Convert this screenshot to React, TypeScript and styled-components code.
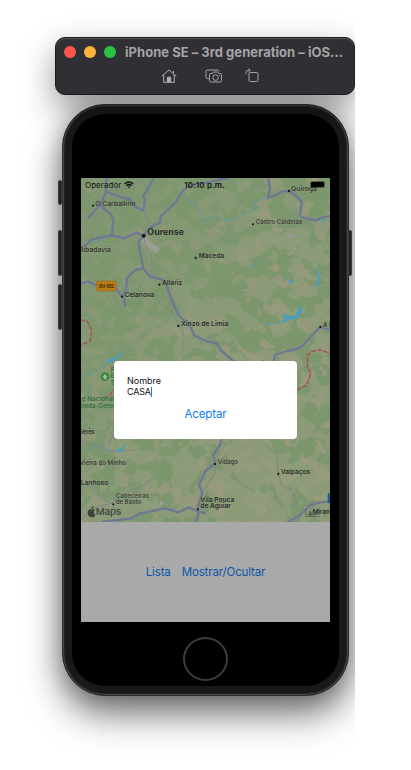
import React from "react";
import styled, { createGlobalStyle } from "styled-components";

const GlobalStyle = createGlobalStyle`
  *, *::before, *::after { box-sizing: border-box; }
  body { margin: 0; background: #fff; font-family: Inter, "Liberation Sans", sans-serif; }
`;

const Desktop = styled.main`
  width: 355px;
  height: 770px;
  padding: 37px 0 0 55px;
  overflow: hidden;
  background: #fff;
`;

const TitleBar = styled.header`
  position: relative;
  z-index: 1;
  width: 300px;
  height: 58px;
  border-radius: 10px;
  background: #302f34;
  border: 1px solid #1b1b1e;
  box-shadow: inset 0 1px 0 #57565a, 0 14px 34px rgba(0, 0, 0, 0.42);
`;

const TitleRow = styled.div`
  display: flex;
  align-items: center;
  height: 28px;
  padding-left: 8px;
`;

const Light = styled.span<{ $color: string }>`
  width: 12px;
  height: 12px;
  margin-right: 8px;
  border-radius: 50%;
  background: ${(p) => p.$color};
`;

const Title = styled.h1`
  margin: 0 0 0 1px;
  font-size: 13px;
  line-height: 16px;
  font-weight: 700;
  letter-spacing: 0.03px;
  white-space: nowrap;
  color: #a5a4a8;
`;

const Tools = styled.div`
  display: flex;
  padding: 2px 0 0 105px;
  svg { display: block; margin-right: 28px; }
  svg:nth-child(2) { margin-right: 22px; }
`;

const Phone = styled.section`
  position: relative;
  width: 287px;
  height: 592px;
  margin: 9px 0 0 7px;
  padding: 9px;
  border: 1px solid #2c2c2d;
  border-radius: 43px;
  background: #191919;
  box-shadow: inset 0 0 0 1px #464647, inset 0 0 0 2px #252526,
    0 18px 36px rgba(0, 0, 0, 0.56), 0 0 22px rgba(0, 0, 0, 0.2);
`;

const SideKey = styled.i<{ $top: number; $height: number; $right?: boolean }>`
  position: absolute;
  top: ${(p) => p.$top}px;
  ${(p) => (p.$right ? "right: -4px;" : "left: -5px;")}
  width: 4px;
  height: ${(p) => p.$height}px;
  border-radius: 2px;
  background: #242425;
  border: 1px solid #3b3b3c;
`;

const Glass = styled.div`
  display: flex;
  flex-direction: column;
  align-items: center;
  height: 572px;
  padding-top: 64px;
  border-radius: 33px;
  background: #000;
`;

const Screen = styled.div`
  position: relative;
  width: 249px;
  height: 444px;
  overflow: hidden;
  background: #a9a9a9;
`;

const MapSvg = styled.svg`
  display: block;
  width: 249px;
  height: 344px;
`;

const StatusBar = styled.div`
  position: absolute;
  inset: 0 0 auto 0;
  display: grid;
  grid-template-columns: 1fr auto 1fr;
  align-items: center;
  height: 14px;
  padding: 0 6px 0 4px;
  color: #111610;
  font-size: 8px;
  line-height: 12px;
`;

const Carrier = styled.span`
  display: flex;
  align-items: center;
  gap: 3px;
  letter-spacing: 0.05px;
`;

const Clock = styled.span`
  font-weight: 600;
  letter-spacing: 0.12px;
`;

const Battery = styled.i`
  justify-self: end;
  width: 13px;
  height: 5px;
  margin-top: -1px;
  border-radius: 1px;
  background: #000;
  box-shadow: 0 0 0 1px rgba(0, 0, 0, 0.35);
`;

const Actions = styled.nav`
  display: flex;
  justify-content: center;
  align-items: center;
  gap: 11px;
  height: 100px;
  padding-top: 1px;
`;

const LinkButton = styled.button<{ $bright?: boolean }>`
  padding: 0;
  border: 0;
  background: none;
  font: 400 11.5px/15px Inter, "Liberation Sans", sans-serif;
  letter-spacing: -0.14px;
  color: ${(p) => (p.$bright ? "#0a7cf5" : "#0b55a8")};
`;

const Dialog = styled.div`
  position: absolute;
  left: 33px;
  top: 183px;
  display: flex;
  flex-direction: column;
  width: 183px;
  height: 78px;
  padding: 14px 13px 0;
  border-radius: 4px;
  background: #fff;
  color: #111;
  font-size: 9px;
  line-height: 11px;
`;

const Field = styled.div`
  display: flex;
  align-items: center;
  height: 11px;
  letter-spacing: -0.2px;
`;

const Caret = styled.i`
  width: 1px;
  height: 10px;
  background: #3b67e8;
`;

const Accept = styled(LinkButton)`
  align-self: center;
  margin-top: 10px;
`;

const HomeButton = styled.div`
  width: 45px;
  height: 44px;
  margin-top: 15px;
  border: 2px solid #3d3d3d;
  border-radius: 50%;
`;

const majorRoads = [
  "M18 218L35 208 50 193 75 188 110 181 148 190 185 173 205 182",
  "M95 9L92 30V55L75 90 108 118 116 135 110 181M40 128L75 90",
  "M92 50L140 68 165 72 180 95 205 107 210 75 205 65 225 30 237 9",
  "M205 182L225 158 255 143 258 123 300 85 325 45 350 30 390 24 425 16 460 9",
  "M205 182L191 200 196 235 205 280 225 305 265 315 275 330 286 365 310 420 345 452 357 480 395 500 425 505 440 528 475 558 560 625",
  "M205 280L180 285 155 310V335L145 360 150 390M18 325L40 320 60 330 120 335 140 365",
  "M580 9L585 40 578 68 605 60 620 50 645 48 665 65 680 80 675 123 690 130 725 136 740 128 766 123",
  "M595 565L600 540 635 528 660 523 680 515 735 456 765 464",
  "M85 1040L170 1030 195 1015 270 1000 310 1012 340 998 360 1005 390 1015",
  "M440 790L435 810 415 840 420 865 390 890 372 930 382 955 367 1000 370 1020 362 1041",
  "M640 1040L670 1025 705 990 735 982 766 980",
];

const minorRoads = [
  "M92 50L150 38 200 15",
  "M207 107L220 145 205 180 215 220 228 240 232 280 225 305",
  "M286 370L292 420 320 455 327 490 320 540 330 570",
  "M485 790L450 810 435 830M420 870V895L400 925 382 955",
  "M550 790L575 815 605 840 610 895 620 930 655 950 665 990",
  "M18 795L60 810 100 830 180 825M100 810L120 770",
  "M18 930L50 935 70 965 110 985 130 1015M110 985L170 945 210 930 240 900",
  "M110 985L50 1000 25 1030",
  "M395 480L420 500 435 530M705 990L725 1040",
];

const rivers = [
  "M325 55L340 75 370 97 385 120 390 138 420 122 440 135 475 135 510 115 545 100 540 80 578 68",
  "M140 530L122 548 105 552 85 570 55 595 35 600 18 620",
  "M35 205L50 197 70 199 95 185",
  "M35 828L50 820 75 812 90 822 120 832 135 823 155 810",
  "M715 275L725 290 735 305 732 325 720 335 717 345",
  "M530 272L545 270 548 264 556 262M632 310L645 320 655 320M455 205L445 195 438 192",
  "M570 449L600 445 628 442M738 128L752 138",
];

const streams = [
  "M200 485L235 455 310 420 350 390 390 385M265 720L300 740 345 700",
  "M660 130L680 180 720 230M450 250L445 200 470 160M330 900L380 840 400 800",
];

const clearings = [
  "M193 155L215 180 240 210 255 220 250 235 225 230 200 215 190 185Z",
  "M190 500L230 470 270 450 315 455 335 410 345 360 400 390 440 440 420 470 390 490 340 478 300 480 260 485 220 495Z",
  "M470 235L500 205 530 185 575 170 610 195 570 230 540 250 495 262Z",
  "M500 90L540 108 580 105 600 120 560 130 515 122Z",
  "M590 190L640 170 680 190 660 220 610 225Z",
  "M590 375L610 365 640 400 660 420 650 450 625 460 600 420Z",
  "M450 800L540 780 590 800 610 860 590 920 540 945 495 920 460 870Z",
  "M395 890L425 880 470 910 530 950 590 960 620 1000 590 1041H420L440 990 400 960Z",
  "M610 880L690 850 766 870V980L700 975 665 940 620 930Z",
  "M130 800L195 825 245 830 230 860 190 870 160 850 120 840Z",
  "M18 1000L65 960 110 975 190 990 240 975 250 1000 160 1035 18 1041Z",
  "M300 880L345 850 385 855 370 900 340 940 300 950 285 920Z",
  "M18 35L50 30 70 45 45 55Z",
  "M480 20L515 15 530 30 500 40 490 55Z",
];

type Place = {
  x: number;
  y: number;
  text: string;
  w: number;
  size?: number;
  color?: string;
  dot?: [number, number];
  bold?: boolean;
};

const places: Place[] = [
  { x: 61, y: 91, text: "O Carballiño", w: 121, dot: [54, 92], color: "#34372f" },
  { x: 217, y: 179, text: "Ourense", w: 110, size: 27, bold: true, dot: [206, 182] },
  { x: 12, y: 231, text: "Ribadavia", w: 96, color: "#373931" },
  { x: 371, y: 248, text: "Maceda", w: 76, dot: [362, 249] },
  { x: 648, y: 46, text: "Quiroga", w: 78, dot: [642, 48], color: "#373931" },
  { x: 542, y: 147, text: "Castro Caldelas", w: 140, dot: [534, 148], color: "#424439" },
  { x: 261, y: 329, text: "Allariz", w: 61, dot: [253, 329] },
  { x: 149, y: 364, text: "Celanova", w: 89, dot: [141, 365] },
  { x: 318, y: 452, text: "Xinzo de Limia", w: 142, dot: [310, 453] },
  { x: 744, y: 455, text: "A Gudiña", w: 80, dot: [736, 456], color: "#373931" },
  { x: 527, y: 571, text: "Verín", w: 50 },
  { x: 12, y: 777, text: "Gerês", w: 46 },
  { x: 14, y: 870, text: "Vieira do Minho", w: 139, color: "#3a3e36" },
  { x: 17, y: 930, text: "Lanhoso", w: 83, color: "#30332c" },
  { x: 122, y: 967, text: "Cabeceiras", w: 100, color: "#42453b" },
  { x: 122, y: 987, text: "de Basto", w: 77, dot: [115, 988], color: "#42453b" },
  { x: 428, y: 866, text: "Vidago", w: 61, dot: [420, 867], color: "#3b3e35" },
  { x: 618, y: 895, text: "Valpaços", w: 87, dot: [610, 897] },
  { x: 376, y: 979, text: "Vila Pouca", w: 102 },
  { x: 376, y: 999, text: "de Aguiar", w: 92, dot: [369, 1003] },
  { x: 713, y: 1015, text: "Mirandela", w: 91, dot: [706, 1019], color: "#252822" },
];

const Terrain = () => (
  <>
    <defs>
      <filter id="patches" x="0" y="0" width="100%" height="100%" colorInterpolationFilters="sRGB">
        <feTurbulence type="fractalNoise" baseFrequency="0.017 0.019" numOctaves={4} seed={8} />
        <feColorMatrix values="0 0 0 0 0.565  0 0 0 0 0.61  0 0 0 0 0.48  22 0 0 0 -11" />
      </filter>
      <filter id="heath" x="0" y="0" width="100%" height="100%" colorInterpolationFilters="sRGB">
        <feTurbulence type="fractalNoise" baseFrequency="0.024 0.026" numOctaves={3} seed={21} />
        <feColorMatrix values="0 0 0 0 0.61  0 0 0 0 0.605  0 0 0 0 0.495  0 22 0 0 -13.6" />
      </filter>
      <linearGradient id="spread" x1="0.15" y1="0" x2="0.75" y2="0.5">
        <stop offset="0" stopColor="#444" />
        <stop offset="1" stopColor="#ddd" />
      </linearGradient>
      <mask id="density">
        <rect x="18" y="9" width="747" height="1032" fill="url(#spread)" />
      </mask>
    </defs>
    <rect x="18" y="9" width="747" height="1032" fill="#7c966e" />
    <path d={clearings.join("")} fill="#8d9a77" />
    <g mask="url(#density)">
      <rect x="18" y="9" width="747" height="1032" filter="url(#patches)" />
      <rect x="18" y="9" width="747" height="1032" filter="url(#heath)" />
    </g>
    <path d="M195 180L212 183 228 206 255 219 243 233 222 216 210 210 200 195Z" fill="#9c9c99" />
    <path d="M640 175L657 180 650 193 640 187ZM105 975L120 980 118 1000 102 992ZM255 975L268 985 255 995Z" fill="#9a9a97" />
  </>
);

const RegionMap = () => (
  <MapSvg viewBox="18 9 747 1032" preserveAspectRatio="none">
    <Terrain />
    <g fill="none" strokeLinejoin="round" strokeLinecap="round">
      <path d={streams.join("")} stroke="#6d9a8c" strokeWidth="1.6" />
      <path d={rivers.join("")} stroke="#5b9ba5" strokeWidth="3" />
      <path d={minorRoads.join("")} stroke="#808985" strokeWidth="3.5" />
      <path d={majorRoads.join("")} stroke="#8c94a0" strokeWidth="10" opacity=".5" />
      <path d={majorRoads.join("")} stroke="#6f788c" strokeWidth="7" />
      <path
        d="M18 435L35 437 46 455 50 470 45 498 18 510M665 645L695 630 708 595 697 575 698 540 710 530 735 525 750 529 766 537M85 668L105 660 118 645"
        stroke="#a85558"
        strokeWidth="5"
        strokeDasharray="14 4"
        strokeLinecap="butt"
      />
    </g>
    <path
      d="M616 443L627 430 625 412 640 422 660 421 670 400 680 393 682 407 668 430 645 436 630 441ZM85 565L105 552 125 545 142 528 137 543 113 560ZM120 829L140 818 155 810 138 832ZM632 307L643 318 658 317 650 326 640 321ZM714 274L726 288 738 307 733 328 719 335 730 315 727 296ZM740 130L752 137 746 140Z"
      fill="#4f9eb8"
    />
    <rect x="65" y="318" width="58" height="30" rx="5" fill="#b87d16" stroke="#99681a" strokeWidth="2" />
    <rect x="758" y="954" width="20" height="31" rx="5" fill="#1c5da8" />
    <circle cx="90" cy="605" r="13" fill="#338a3d" />
    <path d="M90 597L98 606H94V613H86V606H82Z" fill="#a2bd98" />
    <g fontFamily='Inter, "Liberation Sans", sans-serif' stroke="#98a68b" strokeOpacity="0.55" strokeWidth="2.5" paintOrder="stroke">
      {places.map((p) => (
        <React.Fragment key={p.text}>
          {p.dot && (
            <circle cx={p.dot[0]} cy={p.dot[1]} r={p.bold ? 6 : 3.4} fill="#171a15" strokeWidth="1.5" />
          )}
          <text
            x={p.x}
            y={p.y + 1}
            fontSize={p.size ?? 19.5}
            fontWeight={p.bold ? 700 : 600}
            fill={p.color ?? "#292c25"}
            textLength={p.w}
            lengthAdjust="spacingAndGlyphs"
          >
            {p.text}
          </text>
        </React.Fragment>
      ))}
      <g fill="#2b6a33" fontSize="18" fontWeight="600">
        <text x="107" y="590">P</text>
        <text x="107" y="609">E</text>
        <text x="107" y="629">S</text>
        <text x="21" y="679" textLength="96" lengthAdjust="spacingAndGlyphs">e Nacional</text>
        <text x="18" y="698" textLength="104" lengthAdjust="spacingAndGlyphs">neda-Gerês</text>
      </g>
    </g>
    <text
      x="71"
      y="338"
      fontFamily='"Liberation Sans", sans-serif'
      fontSize="14.5"
      fontWeight="700"
      fill="#30220c"
      textLength="46"
      lengthAdjust="spacingAndGlyphs"
    >
      OU-531
    </text>
    <text x="690" y="1020" fontFamily="Inter, sans-serif" fontSize="17" fill="#414c43" textDecoration="underline">
      Legal
    </text>
    <g fill="#39443a">
      <path d="M50 1004C55 1001 58 1002 60 1005C54 1009 56 1016 61 1019C58 1027 54 1028 50 1026C46 1028 41 1026 39 1018C37 1010 40 1003 45 1003ZM49 1002C49 997 52 994 56 993C56 998 53 1002 49 1002Z" />
      <text x="62" y="1019" fontFamily="Inter, sans-serif" fontSize="28" fontWeight="500" textLength="77" lengthAdjust="spacingAndGlyphs">
        Maps
      </text>
    </g>
  </MapSvg>
);

const HomeIcon = () => (
  <svg width="16" height="16" viewBox="0 0 16 16" fill="none" stroke="#b0afb4" strokeWidth="1">
    <path d="M.7 8.3L8 2l7.3 6.3M2.7 7v7.3h10.6V7M12.5 5.5V3" />
    <path d="M6.3 14V9.2h3.4V14z" fill="#b0afb4" />
  </svg>
);

const CameraIcon = () => (
  <svg width="18" height="16" viewBox="0 0 18 16" fill="none" stroke="#a5a4a9" strokeWidth="1">
    <path d="M3.8 10.5H2.3Q1 10.5 1 9.2V3.3Q1 2 2.3 2h10.4Q14 2 14 3.5" />
    <path d="M5.8 5.5h1.5l1-1.5h4.2l1 1.5h1.8q1.2 0 1.2 1.2v6q0 1.3-1.2 1.3H5.8q-1.3 0-1.3-1.3v-6q0-1.2 1.3-1.2z" />
    <circle cx="10.6" cy="9.6" r="2.8" />
    <path d="M14.3 7.5h.7" />
  </svg>
);

const RotateIcon = () => (
  <svg width="15" height="16" viewBox="0 0 15 16" fill="none" stroke="#a5a4a9" strokeWidth="1">
    <rect x="4" y="4.5" width="9" height="9" rx="1.2" />
    <path d="M1 6.2V4.5Q1 2.3 3.2 2.3h1.8M3.4.5l1.8 1.8L3.4 4" />
  </svg>
);

const WifiIcon = () => (
  <svg width="10" height="8" viewBox="0 0 10 8" fill="none" stroke="#111610" strokeWidth="1.5">
    <path d="M.7 2.9Q5-.8 9.3 2.9M2.5 4.7Q5 2.6 7.5 4.7" />
    <path d="M3.8 5.9Q5 5 6.2 5.9L5 7.2z" fill="#111610" stroke="none" />
  </svg>
);

export default function App() {
  return (
    <>
      <GlobalStyle />
      <Desktop>
        <TitleBar>
          <TitleRow>
            <Light $color="#ff5550" />
            <Light $color="#fdb23b" />
            <Light $color="#2ac143" />
            <Title>iPhone SE – 3rd generation – iOS…</Title>
          </TitleRow>
          <Tools>
            <HomeIcon />
            <CameraIcon />
            <RotateIcon />
          </Tools>
        </TitleBar>
        <Phone>
          <SideKey $top={75} $height={25} />
          <SideKey $top={125} $height={46} />
          <SideKey $top={179} $height={46} />
          <SideKey $top={125} $height={46} $right />
          <Glass>
            <Screen>
              <RegionMap />
              <StatusBar>
                <Carrier>
                  Operador
                  <WifiIcon />
                </Carrier>
                <Clock>10:10 p.m.</Clock>
                <Battery />
              </StatusBar>
              <Actions>
                <LinkButton>Lista</LinkButton>
                <LinkButton>Mostrar/Ocultar</LinkButton>
              </Actions>
              <Dialog>
                <div>Nombre</div>
                <Field>
                  CASA
                  <Caret />
                </Field>
                <Accept $bright>Aceptar</Accept>
              </Dialog>
            </Screen>
            <HomeButton />
          </Glass>
        </Phone>
      </Desktop>
    </>
  );
}
